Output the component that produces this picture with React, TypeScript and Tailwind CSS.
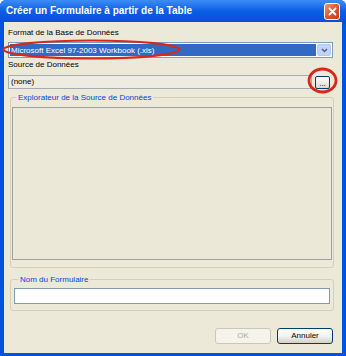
import React from 'react';

const font = { fontFamily: '"Liberation Sans", Arial, sans-serif' };

const GroupBox = ({ title, className, children }: { title: string; className?: string; children: React.ReactNode }) => (
  <fieldset className={`border border-[#d0d0bf] rounded-[3px] ${className ?? ''}`}>
    <legend className="ml-[4px] px-[2px] text-[8px] leading-[11px] text-[#0046d5]">{title}</legend>
    {children}
  </fieldset>
);

const XpButton = ({ label, disabled }: { label: string; disabled?: boolean }) => (
  <button
    disabled={disabled}
    className={
      disabled
        ? 'w-[56px] h-[16px] rounded-[3px] border border-[#c9c7ba] bg-[#f5f4ea] text-[8px] text-[#aca899]'
        : 'w-[56px] h-[16px] rounded-[3px] border border-[#003c74] bg-gradient-to-b from-white via-[#f4f3ee] to-[#d6d0c5] text-[8px] text-black'
    }
  >
    {label}
  </button>
);

export default function App() {
  return (
    <div className="relative w-[346px] h-[356px] flex flex-col bg-[#0053e1] rounded-t-[6px] overflow-hidden" style={font}>
      {/* title bar */}
      <div className="h-[22px] flex items-center justify-between pl-[6px] pr-[6px] bg-gradient-to-b from-[#3d8cf5] via-[#0a5ee6] to-[#0a4fd6]">
        <span className="text-[10px] font-bold text-white leading-none">Créer un Formulaire à partir de la Table</span>
        <div className="w-[16px] h-[17px] rounded-[3px] border border-white bg-gradient-to-br from-[#f0957a] via-[#e0552f] to-[#c43a18] flex items-center justify-center">
          <svg width="9" height="9" viewBox="0 0 9 9">
            <path d="M1.5 1.5 L7.5 7.5 M7.5 1.5 L1.5 7.5" stroke="white" strokeWidth="1.8" strokeLinecap="round" />
          </svg>
        </div>
      </div>

      {/* body */}
      <div className="flex-1 mx-[4px] mb-[3px] bg-[#ece9d8] flex flex-col pt-[5px] pl-[4px] pr-[9px] text-[8px] text-black">
        <div className="leading-[12px]">Format de la Base de Données</div>
        <div className="mt-[3px] h-[16px] border border-[#7f9db9] bg-white flex items-center p-[1px]">
          <div className="flex-1 h-full bg-[#316ac5] text-white leading-[14px] pl-[1px]">Microsoft Excel 97-2003 Workbook (.xls)</div>
          <div className="w-[14px] h-full ml-[1px] rounded-[2px] bg-[#c1d3fb] border border-[#b4c8f5] flex items-center justify-center">
            <svg width="7" height="5" viewBox="0 0 7 5">
              <path d="M1 1 L3.5 3.5 L6 1" fill="none" stroke="#4d6185" strokeWidth="1.5" />
            </svg>
          </div>
        </div>
        <div className="leading-[12px] mt-[1px]">Source de Données</div>
        <div className="mt-[4px] flex items-center">
          <div className="flex-1 h-[14px] border border-[#a5acb5] bg-[#eeebe0] leading-[12px] pl-[2px]">(none)</div>
          <div className="ml-[3px] mr-[3px] w-[15px] h-[13px] rounded-[2px] border border-[#003c74] bg-gradient-to-b from-white to-[#dcd8cc] flex items-end justify-center leading-[9px] text-[8px]">...</div>
        </div>

        <GroupBox title="Explorateur de la Source de Données" className="mt-[3px] ml-[2px] mr-[-1px] h-[176px] px-[1px] pb-[7px]">
          <div className="mt-[4px] h-[153px] border border-[#a0a0a0] bg-[#ebe8d7]" />
        </GroupBox>

        <GroupBox title="Nom du Formulaire" className="mt-[6px] ml-[2px] mr-[-1px] h-[37px] px-[3px] pb-[6px]">
          <div className="mt-[3px] h-[16px] border border-[#7f9db9] bg-white" />
        </GroupBox>

        <div className="mt-auto mb-[9px] flex justify-end gap-[6px]">
          <XpButton label="OK" disabled />
          <XpButton label="Annuler" />
        </div>
      </div>

      {/* red annotation marks */}
      <svg className="absolute left-0 top-0 pointer-events-none" width="346" height="356">
        <ellipse cx="91.5" cy="49.5" rx="88" ry="9" fill="none" stroke="#d8281c" strokeWidth="2.2" />
        <ellipse cx="322.5" cy="80.5" rx="13.5" ry="11.5" fill="none" stroke="#d8281c" strokeWidth="2.8" />
      </svg>
    </div>
  );
}
